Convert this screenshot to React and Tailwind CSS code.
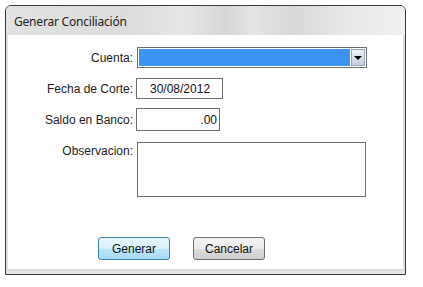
const FONT = { fontFamily: '"Liberation Sans", Arial, sans-serif' };

function Row({ label, children, mt, center = true }) {
	return (
		<div className={`flex ${center ? 'items-center' : 'items-start'} ${mt}`}>
			<div className="w-[129px] pr-[4px] text-right text-[12px] text-[#222]">{label}</div>
			{children}
		</div>
	);
}

export default function App() {
	return (
		<div className="w-[423px] h-[287px] bg-white pt-[5px] pl-[5px]" style={FONT}>
			<div className="w-[401px] h-[270px] flex flex-col border border-[#3a3a3a] rounded-t-[6px] overflow-hidden bg-[#e4e4e4]">
				{/* title bar */}
				<div className="h-[29px] flex items-center pl-[8px] pt-[2px] bg-[linear-gradient(90deg,#e2e2e2_0%,#dcdcdc_30%,#e6e6e6_45%,#d6d6d6_55%,#e4e4e4_62%,#d8d8d8_72%,#e8e8e8_85%,#f0f0f0_100%)]">
					<span className="text-[12px] tracking-[-0.2px] text-[#222]" style={{ fontFamily: '"Noto Sans", "Open Sans", sans-serif' }}>
						Generar Conciliación
					</span>
				</div>

				{/* body */}
				<div className="flex-1 mb-[3px] bg-white border-x-[2px] border-b-[2px] border-[#dedede] flex flex-col">
					<Row label="Cuenta:" mt="mt-[12px]">
						<div className="w-[230px] h-[21px] border border-[#6f6f6f] flex p-[1px] bg-white">
							<div className="flex-1 bg-[#3b93f3]" />
							<div className="w-[14px] ml-[1px] border border-[#9aa7b6] bg-[linear-gradient(180deg,#eaf0f6,#c3cfdc)] flex items-center justify-center">
								<div className="w-0 h-0 border-l-[4px] border-r-[4px] border-t-[4px] border-l-transparent border-r-transparent border-t-black" />
							</div>
						</div>
					</Row>
					<Row label="Fecha de Corte:" mt="mt-[10px]">
						<div className="w-[87px] h-[21px] -ml-[1px] border border-[#6f6f6f] flex items-center pl-[13px] text-[12px] text-[#111]">
							30/08/2012
						</div>
					</Row>
					<Row label="Saldo en Banco:" mt="mt-[9px]">
						<div className="w-[84px] h-[23px] -ml-[1px] border border-[#6f6f6f] flex items-center justify-end pr-[2px] text-[12px] text-[#111]">
							.00
						</div>
					</Row>
					<Row label="Observacion:" mt="mt-[11px]" center={false}>
						<div className="w-[229px] h-[55px] border border-[#6f6f6f]" />
					</Row>
					<div className="flex mt-[40px] pl-[90px] gap-[23px]">
						<button className="w-[72px] h-[23px] rounded-[3px] border border-[#3c7fb1] bg-[linear-gradient(180deg,#eaf6fd_0%,#d9f0fc_50%,#bee6fd_51%,#a7d9f5_100%)] text-[12px] text-[#111]">
							Generar
						</button>
						<button className="w-[72px] h-[23px] rounded-[3px] border border-[#707070] bg-[linear-gradient(180deg,#f2f2f2_0%,#ebebeb_50%,#dddddd_51%,#cfcfcf_100%)] text-[12px] text-[#111]">
							Cancelar
						</button>
					</div>
				</div>
			</div>
		</div>
	);
}
